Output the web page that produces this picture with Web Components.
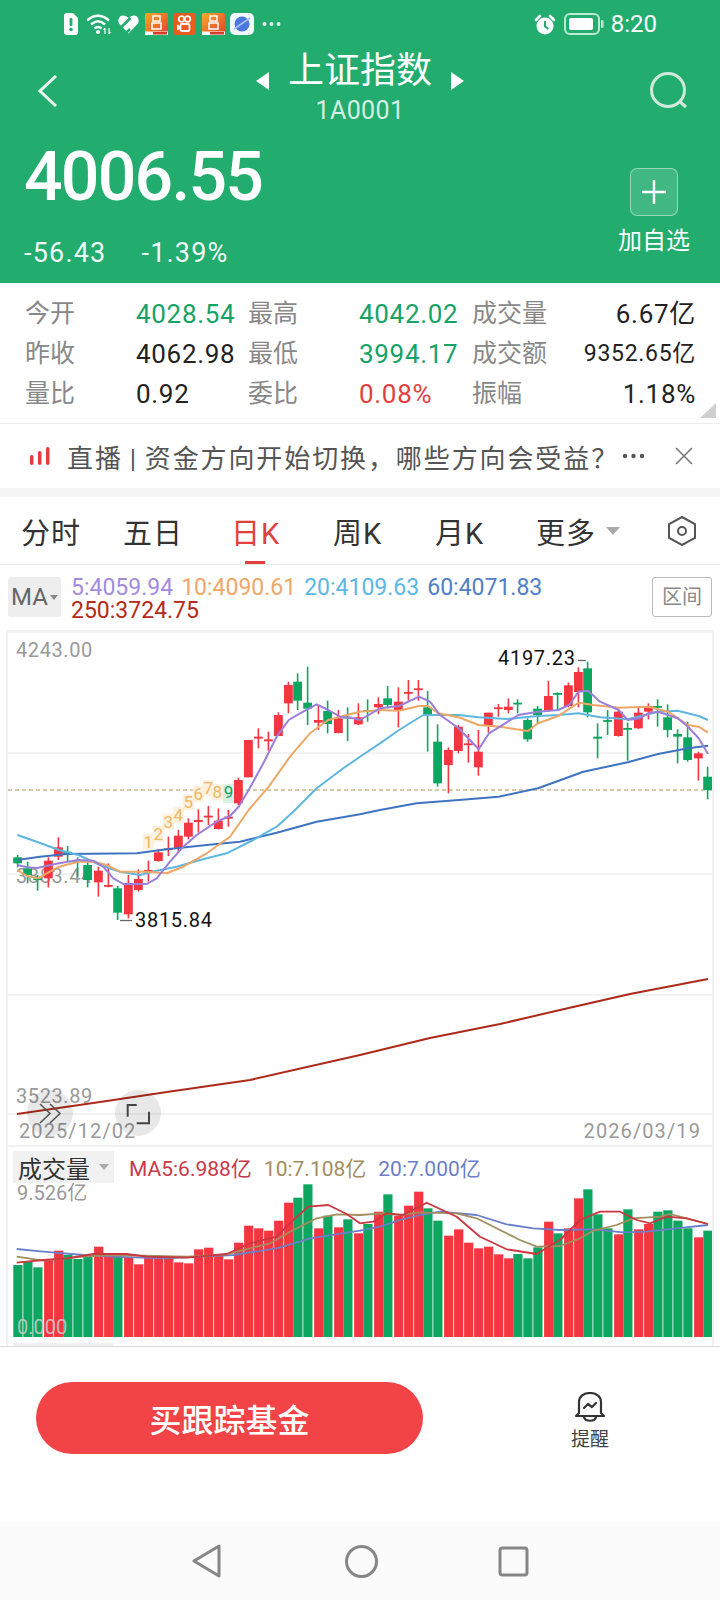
<!DOCTYPE html>
<html lang="zh">
<head>
<meta charset="utf-8">
<title>上证指数</title>
<style>
    html, body { margin: 0; padding: 0; background: #fff; }
    body { width: 720px; height: 1600px; overflow: hidden; font-family: Roboto, "Noto Sans CJK SC", sans-serif; }
</style>
</head>
<body>
<quote-header name="上证指数" code="1A0001" price="4006.55" change="-56.43" percent="-1.39%"></quote-header>
<stats-panel>
    <stat-item label="今开" value="4028.54" tone="up"></stat-item>
    <stat-item label="最高" value="4042.02" tone="up"></stat-item>
    <stat-item label="成交量" value="6.67亿" wide></stat-item>
    <stat-item label="昨收" value="4062.98"></stat-item>
    <stat-item label="最低" value="3994.17" tone="up"></stat-item>
    <stat-item label="成交额" value="9352.65亿" wide small></stat-item>
    <stat-item label="量比" value="0.92"></stat-item>
    <stat-item label="委比" value="0.08%" tone="down"></stat-item>
    <stat-item label="振幅" value="1.18%" wide></stat-item>
</stats-panel>
<news-bar>直播 | 资金方向开始切换&#xFF0C;哪些方向会受益&#xFF1F;</news-bar>
<period-tabs>
    <tab-item>分时</tab-item>
    <tab-item>五日</tab-item>
    <tab-item active>日K</tab-item>
    <tab-item>周K</tab-item>
    <tab-item>月K</tab-item>
    <tab-item menu>更多</tab-item>
</period-tabs>
<ma-legend></ma-legend>
<kline-chart></kline-chart>
<volume-chart></volume-chart>
<action-bar>买跟踪基金</action-bar>
<nav-bar></nav-bar>

<script>
class StatusBar extends HTMLElement {
    constructor() {
        super();
        this.shadow = this.attachShadow({ mode: 'open' });
    }

    connectedCallback() {
        this.shadow.innerHTML = `
        <style>
            :host { display: flex; align-items: center; height: 48px; padding: 0 63px 0 63px; color: #fff; }
            svg { display: block; flex: none; }
            .time { margin-left: 7px; font-size: 24px; line-height: 48px; }
            .right { margin-left: auto; display: flex; align-items: center; }
        </style>
        <svg width="14" height="22" viewBox="0 0 14 22" style="margin-left:1px">
            <path d="M3 0H9L14 5V19Q14 22 11 22H3Q0 22 0 19V3Q0 0 3 0Z" fill="#fff"/>
            <rect x="5.600" y="5" width="2.800" height="8" rx="1.200" fill="#22ad6f"/>
            <circle cx="7" cy="16.500" r="1.800" fill="#22ad6f"/>
        </svg>
        <svg width="26" height="22" viewBox="0 0 26 22" style="margin-left:9px" fill="none" stroke="#fff" stroke-width="2.400">
            <path d="M0 7.500Q11-2 22 7.500"/><path d="M4 11.500Q11 5 18 11.500"/><path d="M7.500 15.500Q11 12.500 14.500 15.500"/>
            <circle cx="11" cy="19" r="2" fill="#fff" stroke="none"/>
            <path d="M18 15V21M16.500 17L18 15M22 15V21M23.500 19L22 21" stroke-width="1.200"/>
        </svg>
        <svg width="21" height="20" viewBox="0 0 21 20" style="margin-left:5px">
            <path d="M10.500 19.500L1 9.500Q-1 4 3.500 1.800Q7.500 .5 10.500 4Q14 .5 17.500 1.800Q22 4 20 9.500Z" fill="#fff"/>
            <path d="M3 13.500L12.500 4M8 19L12 15" stroke="#22ad6f" stroke-width="2.600" fill="none"/>
        </svg>
        <svg width="23" height="22" viewBox="0 0 23 22" style="margin-left:6px">
            <defs><linearGradient id="a" x1="0" y1="0" x2="1" y2="1"><stop offset="0" stop-color="#f5ab2b"/><stop offset="1" stop-color="#e63d2a"/></linearGradient></defs>
            <rect width="23" height="22" rx="2" fill="url(#a)"/>
            <path d="M8 3H15V8H8ZM7 10H16V16H7Z" fill="none" stroke="#fff" stroke-width="1.500"/>
            <rect y="18.500" width="23" height="3.500" fill="#fff"/><rect x="8" y="19" width="14" height="2.500" fill="#d9382a"/>
        </svg>
        <svg width="21" height="22" viewBox="0 0 21 22" style="margin-left:6px">
            <rect width="21" height="22" rx="2" fill="#e95a1d"/>
            <g fill="none" stroke="#fff" stroke-width="1.800"><circle cx="7.500" cy="6" r="2.800"/><circle cx="13.500" cy="6" r="2.800"/><rect x="6.500" y="11" width="9" height="7" rx="1.500"/></g>
            <path d="M6 13L3 11.500V17.500L6 16Z" fill="#fff"/>
        </svg>
        <svg width="23" height="22" viewBox="0 0 23 22" style="margin-left:7px">
            <rect width="23" height="22" rx="2" fill="url(#a)"/>
            <path d="M8 3H15V8H8ZM7 10H16V16H7Z" fill="none" stroke="#fff" stroke-width="1.500"/>
            <rect y="18.500" width="23" height="3.500" fill="#fff"/><rect x="8" y="19" width="14" height="2.500" fill="#d9382a"/>
        </svg>
        <svg width="24" height="22" viewBox="0 0 24 22" style="margin-left:5px">
            <rect width="24" height="22" rx="5" fill="#f2f6fd"/>
            <circle cx="12" cy="11" r="7.500" fill="#4a78e0"/>
            <path d="M4 16L20 5" stroke="#a9c2f5" stroke-width="1.600"/>
        </svg>
        <svg width="19" height="6" viewBox="0 0 19 6" style="margin-left:8px" fill="#fff" opacity=".85">
            <circle cx="2.500" cy="3" r="2"/><circle cx="9.500" cy="3" r="2"/><circle cx="16.500" cy="3" r="2"/>
        </svg>
        <div class="right">
            <svg width="22" height="21" viewBox="0 0 22 21">
                <circle cx="11" cy="12" r="8.500" fill="#fff"/>
                <path d="M11 7V12.500L14.500 15" fill="none" stroke="#22ad6f" stroke-width="2"/>
                <path d="M2 6L6 2M16 2L20 6" stroke="#fff" stroke-width="2.600" stroke-linecap="round"/>
            </svg>
            <svg width="40" height="22" viewBox="0 0 40 22" style="margin-left:8px">
                <rect x="1" y="1" width="34" height="20" rx="5" fill="none" stroke="#bfe8d3" stroke-width="2"/>
                <rect x="5" y="5" width="24" height="12" rx="2" fill="#fff"/>
                <rect x="37" y="7" width="2.500" height="8" rx="1" fill="#bfe8d3"/>
            </svg>
            <span class="time">8:20</span>
        </div>
        `;
    }
}

class QuoteHeader extends HTMLElement {
    constructor() {
        super();
        this.shadow = this.attachShadow({ mode: 'open' });
    }

    connectedCallback() {
        this.shadow.innerHTML = `
        <style>
            :host { display: block; height: 283px; background: #22ad6f; color: #fff; }
            .nav { display: grid; grid-template-columns: 1fr auto 1fr; align-items: center; height: 80px; padding-top: 3px; }
            .back { margin-left: 38px; display: block; }
            .search { margin-left: auto; margin-right: 32px; display: block; }
            .title { display: flex; justify-content: center; align-items: flex-start; gap: 19px; font-size: 36px; line-height: 40px; }
            .arrow { width: 0; height: 0; margin-top: 21px; border-top: 9px solid transparent; border-bottom: 9px solid transparent; }
            .arrow.l { border-right: 13px solid #fff; }
            .arrow.r { border-left: 13px solid #fff; }
            .code { text-align: center; font-size: 25px; line-height: 40px; color: rgba(255,255,255,.82); letter-spacing: .4px; }
            .quote { display: flex; justify-content: space-between; padding: 0 30px 0 24px; }
            .price { font-size: 68px; font-weight: 500; line-height: 70px; margin-top: 11px; letter-spacing: -1.800px; }
            .change { display: flex; gap: 35px; font-size: 27px; line-height: 40px; margin-top: 21px; color: rgba(255,255,255,.96); letter-spacing: 1.200px; }
            .add { margin-top: 37px; display: flex; flex-direction: column; align-items: center; width: 72px; }
            .plus { width: 46px; height: 46px; border: 1px solid rgba(255,255,255,.45); border-radius: 7px; background: rgba(255,255,255,.14); display: flex; align-items: center; justify-content: center; }
            .add span { font-size: 24px; line-height: 34px; margin-top: 8px; }
        </style>
        <status-bar></status-bar>
        <div class="nav">
            <svg class="back" width="20" height="32" viewBox="0 0 20 32" fill="none" stroke="#e8f6ee" stroke-width="3"><path d="M18 1L2 16L18 31"/></svg>
            <div>
                <div class="title"><i class="arrow l"></i><span>${this.getAttribute('name')}</span><i class="arrow r"></i></div>
                <div class="code">${this.getAttribute('code')}</div>
            </div>
            <svg class="search" width="38" height="38" viewBox="0 0 38 38" fill="none" stroke="#cfeadb" stroke-width="3"><circle cx="18" cy="18" r="16.500"/><path d="M29 29L36 35"/></svg>
        </div>
        <div class="quote">
            <div>
                <div class="price">${this.getAttribute('price')}</div>
                <div class="change"><span>${this.getAttribute('change')}</span><span>${this.getAttribute('percent')}</span></div>
            </div>
            <div class="add">
                <div class="plus"><svg width="26" height="26" viewBox="0 0 26 26" stroke="#fff" stroke-width="2.400"><path d="M13 1V25M1 13H25"/></svg></div>
                <span>加自选</span>
            </div>
        </div>
        `;
    }
}

class StatsPanel extends HTMLElement {
    constructor() {
        super();
        this.shadow = this.attachShadow({ mode: 'open' });
    }

    connectedCallback() {
        this.shadow.innerHTML = `
        <style>
            :host { display: grid; grid-template-columns: 223px 224px 224px; grid-auto-rows: 40px; height: 120px; padding: 11px 0 9px 25px; border-bottom: 1px solid #ececec; position: relative; }
            .corner { position: absolute; right: 4px; bottom: 5px; width: 0; height: 0; border-left: 16px solid transparent; border-bottom: 15px solid #cfcfcf; }
        </style>
        <slot></slot>
        <i class="corner"></i>
        `;
    }
}

class StatItem extends HTMLElement {
    constructor() {
        super();
        this.shadow = this.attachShadow({ mode: 'open' });
    }

    connectedCallback() {
        this.shadow.innerHTML = `
        <style>
            :host { display: flex; line-height: 40px; font-size: 26px; color: #222; white-space: nowrap; letter-spacing: .7px; }
            :host([tone="up"]) .v { color: #15a366; }
            :host([tone="down"]) .v { color: #e2403f; }
            :host([wide]) .l { flex: none; width: auto; }
            :host([wide]) .v { margin-left: auto; }
            :host([small]) .v { font-size: 23px; }
            .l { flex: 0 0 111px; font-size: 25px; color: #888; letter-spacing: 0; }
        </style>
        <span class="l">${this.getAttribute('label')}</span>
        <span class="v">${this.getAttribute('value')}</span>
        `;
    }
}

class NewsBar extends HTMLElement {
    constructor() {
        super();
        this.shadow = this.attachShadow({ mode: 'open' });
    }

    connectedCallback() {
        this.shadow.innerHTML = `
        <style>
            :host { display: flex; align-items: center; height: 64px; border-bottom: 9px solid #f5f5f5; padding-left: 30px; color: #555; font-size: 26px; white-space: nowrap; }
            .text { margin-left: 17px; width: 555px; letter-spacing: 1.900px; word-spacing: -1.500px; }
            .close { margin-left: 30px; }
            svg { display: block; flex: none; }
        </style>
        <svg width="20" height="18" viewBox="0 0 20 18" fill="#e23b44"><rect y="8" width="3.500" height="10" rx="1.700"/><rect x="8" y="4" width="3.500" height="14" rx="1.700"/><rect x="16" width="3.500" height="18" rx="1.700"/></svg>
        <span class="text"><slot></slot></span>
        <svg width="23" height="6" viewBox="0 0 23 6" fill="#555"><circle cx="3" cy="3" r="2.200"/><circle cx="11.500" cy="3" r="2.200"/><circle cx="20" cy="3" r="2.200"/></svg>
        <svg class="close" width="18" height="18" viewBox="0 0 18 18" stroke="#777" stroke-width="1.600"><path d="M1 1L17 17M17 1L1 17"/></svg>
        `;
    }
}

class PeriodTabs extends HTMLElement {
    constructor() {
        super();
        this.shadow = this.attachShadow({ mode: 'open' });
    }

    connectedCallback() {
        this.shadow.innerHTML = `
        <style>
            :host { display: grid; grid-template-columns: 102px 108px 102px 102px 101px 132px auto; height: 67px; padding-left: 21px; border-bottom: 1px solid #e8e8e8; align-items: center; }
            svg { display: block; }
        </style>
        <slot></slot>
        <svg width="28" height="30" viewBox="0 0 28 30" fill="none" stroke="#555" stroke-width="2"><path d="M14 1L27 8V22L14 29L1 22V8Z"/><circle cx="14" cy="15" r="4"/></svg>
        `;
    }
}

class TabItem extends HTMLElement {
    constructor() {
        super();
        this.shadow = this.attachShadow({ mode: 'open' });
    }

    connectedCallback() {
        const menu = this.hasAttribute('menu') ? '<i class="caret"></i>' : '';
        this.shadow.innerHTML = `
        <style>
            :host { display: flex; align-items: center; justify-self: start; height: 67px; position: relative; font-size: 29px; letter-spacing: 1px; color: #333; white-space: nowrap; }
            :host([active]) { color: #e2403f; }
            :host([active])::after { content: ""; position: absolute; left: 14px; bottom: 0; width: 20px; height: 3px; background: #e2403f; }
            .caret { margin-left: 10px; width: 0; height: 0; border-left: 7px solid transparent; border-right: 7px solid transparent; border-top: 8px solid #aaa; }
        </style>
        <slot></slot>${menu}
        `;
    }
}

class MaLegend extends HTMLElement {
    constructor() {
        super();
        this.shadow = this.attachShadow({ mode: 'open' });
    }

    connectedCallback() {
        this.shadow.innerHTML = `
        <style>
            :host { display: flex; height: 65px; padding: 12px 8px 0; box-sizing: border-box; align-items: flex-start; }
            .btn { display: flex; align-items: center; justify-content: center; gap: 2px; width: 53px; height: 40px; background: #eee; border-radius: 3px; color: #666; font-size: 24px; }
            .btn i { width: 0; height: 0; border-left: 4px solid transparent; border-right: 4px solid transparent; border-top: 5px solid #888; }
            .vals { margin-left: 10px; margin-top: -1px; font-size: 23px; line-height: 23px; }
            .row { display: flex; gap: 8px; height: 23px; }
            .range { margin-left: auto; width: 58px; height: 38px; border: 1px solid #bbb; border-radius: 3px; color: #888; font-size: 20px; line-height: 38px; text-align: center; }
        </style>
        <div class="btn">MA<i></i></div>
        <div class="vals">
            <div class="row"><span style="color:#a38be0">5:4059.94</span><span style="color:#eea867">10:4090.61</span><span style="color:#5bb8e6">20:4109.63</span><span style="color:#4f80c8">60:4071.83</span></div>
            <div class="row" style="color:#b52a17">250:3724.75</div>
        </div>
        <div class="range">区间</div>
        `;
    }
}

// candle data in thirds of a pixel from the top of the chart: up/down, high, low, body top, body bottom
const CANDLES = [
    ['g',675,712,682,700],['g',695,760,715,735],['g',735,782,745,750],['r',682,772,692,745],['r',622,690,652,680],
    ['g',648,695,665,672],['g',682,740,690,695],['g',695,772,705,750],['r',710,800,722,757],['r',700,772,765,768],
    ['g',768,870,775,848],['r',735,865,765,853],['r',718,785,747,780],['r',692,755,720,727],['r',658,695,667,693],
    ['r',620,678,655,660],['r',600,668,617,655],['r',565,628,578,620],['r',538,608,570,576],['r',528,585,557,562],
    ['r',535,598,572,597],['r',540,590,560,566],['r',443,525,450,520],['r',330,442,330,442],['r',295,355,320,326],
    ['r',305,362,328,334],['r',247,318,255,318],['r',155,250,165,220],['g',130,240,155,212],['g',110,285,218,236],
    ['r',225,300,270,278],['g',212,310,243,282],['r',240,310,265,309],['g',232,333,260,265],['r',220,285,262,283],
    ['g',208,275,240,245],['r',202,252,222,232],['g',168,235,205,225],['r',172,292,215,240],['r',150,212,186,190],
    ['r',150,212,175,180],['g',183,365,232,252],['g',283,470,335,460],['r',352,490,360,405],['r',285,370,290,363],
    ['r',312,398,340,344],['r',300,437,365,412],['r',248,308,248,285],['r',222,260,232,237],['r',205,250,230,240],
    ['g',208,250,218,222],['g',265,335,270,328],['g',228,282,236,255],['r',153,245,198,243],['g',187,240,189,194],
    ['r',158,232,166,228],['r',112,232,126,186],['g',95,262,115,247],['g',280,385,320,326],['g',240,315,270,274],
    ['r',240,320,245,318],['g',278,392,294,298],['r',230,297,248,295],['r',220,268,228,245],['g',208,290,228,232],
    ['g',223,322,262,300],['g',298,400,312,320],['g',275,395,322,390],['r',365,452,370,385],['g',410,508,440,480]
];

const MA_LINES = [
    ['#3f74c0', '52,690 120,680 200,672 410,670 500,658 620,645 720,635 830,608 950,575 1080,553 1140,540 1250,520 1376,510 1496,500 1614,475 1676,452 1750,425 1883,397 1974,372 2064,355 2124,347'],
    ['#5fb6df', '52,615 110,635 177,660 235,675 300,705 360,725 420,735 470,722 530,710 600,690 680,670 760,630 830,590 880,545 950,475 1030,415 1080,380 1140,340 1197,300 1270,255 1376,255 1436,262 1520,267 1614,258 1675,255 1736,250 1800,262 1883,268 1974,245 2033,242 2096,258 2124,270'],
    ['#eea766', '52,720 82,738 113,745 177,710 235,695 280,695 320,705 360,725 440,725 500,730 550,710 620,670 690,620 746,540 806,470 870,380 930,310 985,270 1040,255 1080,245 1140,240 1197,242 1257,228 1284,228 1314,250 1376,262 1436,285 1500,290 1584,303 1614,280 1675,258 1736,218 1780,225 1856,233 1946,230 2004,245 2064,285 2096,290 2124,308'],
    ['#9b7fd8', '52,705 82,712 113,714 147,706 177,700 235,690 280,692 310,710 340,745 370,762 440,762 470,745 510,695 550,650 590,615 650,575 690,558 716,530 746,480 790,400 830,320 866,270 900,250 950,223 985,240 1020,260 1060,265 1080,270 1140,235 1197,228 1257,200 1290,215 1320,255 1376,295 1436,358 1467,310 1500,290 1555,255 1614,245 1675,240 1707,225 1736,185 1764,182 1800,215 1856,240 1883,270 1917,265 1946,250 1974,245 2004,255 2033,265 2064,290 2096,325 2124,372']
];

const thirds = pts => pts.split(' ').map(p => p.split(',').map(n => (n / 3).toFixed(1)).join(',')).join(' ');

class KlineChart extends HTMLElement {
    constructor() {
        super();
        this.shadow = this.attachShadow({ mode: 'open' });
    }

    drawCandles() {
        return CANDLES.map(([kind, hi, lo, top, bot], i) => {
            const x = 17.6 + i * 10 + (kind === 'r' ? 0.8 : 0);
            const color = kind === 'r' ? '#f3363f' : '#0ca660';
            return `<path d="M${x} ${hi / 3}V${lo / 3}" stroke="${color}" stroke-width="1.600"/>
                <rect x="${x - 4.4}" y="${top / 3}" width="8.800" height="${Math.max((bot - top) / 3, 1.8)}" fill="${color}"/>`;
        }).join('');
    }

    drawCounts() {
        const spots = [[445,635],[475,612],[505,575],[535,555],[565,517],[595,492],[625,475],[652,487]];
        const orange = spots.map(([x, y], i) => `
            <rect x="${x / 3 - 5.5}" y="${y / 3 - 8}" width="11" height="16" fill="#fdf1dd"/>
            <text x="${x / 3}" y="${y / 3 + 6}" text-anchor="middle" font-size="17" fill="#eeb86a">${i + 1}</text>`).join('');
        return `${orange}
            <rect x="223" y="154" width="11" height="19" fill="#d9f0e3"/>
            <text x="228.500" y="168" text-anchor="middle" font-size="17" fill="#0ca660">9</text>`;
    }

    connectedCallback() {
        const grid = [123, 244, 365, 484].map(y => `<rect x="8" y="${y - 1}" width="704" height="2" fill="#f3f3f3"/>`).join('');
        const lines = MA_LINES.map(([c, pts]) => `<polyline points="${thirds(pts)}" fill="none" stroke="${c}" stroke-width="2" stroke-linejoin="round"/>`).join('');
        this.shadow.innerHTML = `
        <style>
            :host { display: block; height: 517px; }
            .frame { margin-left: 6px; width: 704px; height: 517px; border-left: 2px solid #f1f1f1; border-right: 2px solid #f1f1f1; }
            svg { display: block; font-family: Roboto, "Noto Sans CJK SC", sans-serif; }
            .axis { fill: #999; font-size: 20px; letter-spacing: .6px; }
            .date { fill: #999; font-size: 20px; letter-spacing: 1.100px; }
            .mark { fill: #111; font-size: 20px; letter-spacing: .7px; }
        </style>
        <div class="frame">
        <svg width="704" height="517" viewBox="8 0 704 517">
            <rect x="8" width="704" height="3" fill="#f1f1f1"/>
            ${grid}
            <rect x="8" y="515" width="704" height="2" fill="#f1f1f1"/>
            <path d="M8 160H712" stroke="#c9b68f" stroke-width="1.300" stroke-dasharray="4 3"/>
            <text class="axis" x="16" y="27">4243.00</text>
            <text class="axis" x="16" y="253">3883.44</text>
            <text class="axis" x="16" y="473">3523.89</text>
            <text class="date" x="19" y="508">2025/12/02</text>
            <text class="date" x="701" y="508" text-anchor="end">2026/03/19</text>
            ${this.drawCounts()}
            ${this.drawCandles()}
            ${lines}
            <polyline points="17,484 100,472 167,462 250,450 360,425 430,408 500,394 560,380 630,364 708,349" fill="none" stroke="#ad2a1a" stroke-width="2" stroke-linejoin="round"/>
            <text class="mark" x="135" y="297">3815.84</text>
            <path d="M120 290.500H132" stroke="#666" stroke-width="1.300"/>
            <text class="mark" x="498" y="35">4197.23</text>
            <path d="M578 30.500H586" stroke="#666" stroke-width="1.300"/>
            <circle cx="50" cy="483" r="23" fill="#000" opacity=".09"/>
            <path d="M40 474L50 483.500L40 493M50 474L60 483.500L50 493" fill="none" stroke="#555" stroke-width="1.600"/>
            <circle cx="138" cy="483" r="23" fill="#000" opacity=".09"/>
            <path d="M127.700 486.700V475H136.700M149 481.700V493.300H136.700" fill="none" stroke="#444" stroke-width="2"/>
        </svg>
        </div>
        `;
    }
}

// volume tops and averages, same thirds of a pixel as the candles, read off the bar chart
const VOLUME_TOPS = [
    246,236,253,228,203,216,228,221,191,211,221,224,244,221,218,221,238,241,199,194,219,229,179,128,136,143,113,59,44,4,136,98,133,109,151,
    123,86,34,99,68,26,76,113,158,139,179,196,191,214,226,213,226,193,116,151,136,46,19,94,136,154,79,139,123,86,82,113,136,163,143
];

const VOLUME_LINES = [
    ['#6a7fc9', '50,198 130,206 250,216 340,221 490,226 600,221 700,216 830,196 930,166 1080,143 1140,131 1200,111 1260,96 1320,86 1430,96 1520,124 1600,136 1680,141 1780,139 1870,148 1940,146 2030,136 2124,126'],
    ['#a38d5f', '50,221 130,233 250,221 340,216 560,221 680,214 810,181 880,141 950,106 1010,94 1080,96 1150,91 1200,96 1260,88 1370,91 1430,106 1500,141 1560,171 1610,191 1680,189 1740,166 1780,143 1850,126 1900,106 1980,101 2010,93 2060,106 2124,123'],
    ['#c9373f', '50,239 130,231 200,226 280,213 380,213 440,221 560,224 680,213 750,181 830,161 880,111 925,71 985,66 1040,93 1080,121 1120,116 1160,91 1210,96 1280,59 1370,101 1440,161 1520,199 1610,213 1680,171 1740,111 1800,86 1860,86 1910,111 1950,121 2000,101 2060,106 2124,123']
];

class VolumeChart extends HTMLElement {
    constructor() {
        super();
        this.shadow = this.attachShadow({ mode: 'open' });
    }

    connectedCallback() {
        const bars = VOLUME_TOPS.map((top, i) => {
            const up = CANDLES[i][0] === 'r';
            const x = 13.300 + i * 10 + (up ? 0.8 : 0);
            return `<rect x="${x}" y="${top / 3}" width="9.200" height="${154 - top / 3}" fill="${up ? '#f3363f' : '#0ca660'}"/>`;
        }).join('');
        const lines = VOLUME_LINES.map(([c, pts]) => `<polyline points="${thirds(pts)}" fill="none" stroke="${c}" stroke-width="1.800" stroke-linejoin="round"/>`).join('');
        this.shadow.innerHTML = `
        <style>
            :host { display: block; height: 200px; box-sizing: border-box; border-bottom: 1px solid #ddd; }
            .frame { margin-left: 6px; width: 704px; height: 195px; padding-top: 4px; border-left: 2px solid #f1f1f1; border-right: 2px solid #f1f1f1; }
            .head { display: flex; align-items: center; height: 32px; margin-left: 5px; font-size: 21px; white-space: nowrap; }
            .btn { display: flex; align-items: center; flex: none; width: 101px; height: 36px; margin: -2px 0; box-sizing: border-box; padding-left: 5px; background: linear-gradient(#f1f1f1, #f1f1f1) center / 100% 32px no-repeat; font-size: 24px; color: #333; }
            .btn i { margin-left: 9px; width: 0; height: 0; border-left: 5px solid transparent; border-right: 5px solid transparent; border-top: 6px solid #aaa; }
            .head span { margin-left: 12px; }
            svg { display: block; font-family: Roboto, "Noto Sans CJK SC", sans-serif; }
        </style>
        <div class="frame">
            <div class="head">
                <div class="btn">成交量<i></i></div>
                <span style="margin-left:15px;color:#c9374a">MA5:6.988亿</span>
                <span style="color:#a38d5f">10:7.108亿</span>
                <span style="color:#6a7fc9">20:7.000亿</span>
            </div>
            <svg width="704" height="163" viewBox="8 0 704 163">
                ${bars}
                ${lines}
                <text x="17" y="17" font-size="20" fill="#999">9.526亿</text>
                <text x="17" y="151" font-size="20" fill="#ccc" opacity=".85">0.000</text>
                <rect x="13" y="160" width="101" height="3" fill="#f1f1f1"/>
            </svg>
        </div>
        `;
    }
}

class ActionBar extends HTMLElement {
    constructor() {
        super();
        this.shadow = this.attachShadow({ mode: 'open' });
    }

    connectedCallback() {
        this.shadow.innerHTML = `
        <style>
            :host { display: flex; align-items: flex-start; height: 175px; padding: 35px 0 0 36px; box-sizing: border-box; }
            .buy { width: 387px; height: 72px; border-radius: 36px; background: #f24446; color: #fff; font-size: 32px; font-weight: 500; display: flex; align-items: center; justify-content: center; }
            .remind { margin: 10px 0 0 148px; display: flex; flex-direction: column; align-items: center; font-size: 19px; color: #444; }
            .remind span { line-height: 24px; margin-top: 5px; }
            svg { display: block; }
        </style>
        <div class="buy"><slot></slot></div>
        <div class="remind">
            <svg width="32" height="31" viewBox="0 0 32 31" fill="none" stroke="#333" stroke-width="2.200" stroke-linejoin="round" stroke-linecap="round">
                <path d="M5 21V10C5 4.500 10 1 16 1C22 1 27 4.500 27 10V21L30 24H2Z"/>
                <path d="M10 25C11 30 21 30 22 25"/>
                <path d="M10 16L14 12L18 15L22 11"/>
            </svg>
            <span>提醒</span>
        </div>
        `;
    }
}

class NavBar extends HTMLElement {
    constructor() {
        super();
        this.shadow = this.attachShadow({ mode: 'open' });
    }

    connectedCallback() {
        this.shadow.innerHTML = `
        <style>
            :host { display: flex; align-items: center; justify-content: center; height: 78px; background: #fbfbfb; }
            svg { display: block; flex: none; }
        </style>
        <svg width="29" height="34" viewBox="0 0 29 34" fill="none" stroke="#868686" stroke-width="3" stroke-linejoin="round"><path d="M27 2V32L2 17Z"/></svg>
        <svg width="35" height="35" viewBox="0 0 35 35" fill="none" stroke="#868686" stroke-width="3" style="margin-left:123px"><circle cx="17.500" cy="17.500" r="15"/></svg>
        <svg width="31" height="31" viewBox="0 0 31 31" fill="none" stroke="#868686" stroke-width="3" style="margin-left:119px"><rect x="2" y="2" width="27" height="27" rx="2.500"/></svg>
        `;
    }
}

window.customElements.define('status-bar', StatusBar);
window.customElements.define('quote-header', QuoteHeader);
window.customElements.define('stats-panel', StatsPanel);
window.customElements.define('stat-item', StatItem);
window.customElements.define('news-bar', NewsBar);
window.customElements.define('period-tabs', PeriodTabs);
window.customElements.define('tab-item', TabItem);
window.customElements.define('ma-legend', MaLegend);
window.customElements.define('kline-chart', KlineChart);
window.customElements.define('volume-chart', VolumeChart);
window.customElements.define('action-bar', ActionBar);
window.customElements.define('nav-bar', NavBar);
</script>
</body>
</html>
